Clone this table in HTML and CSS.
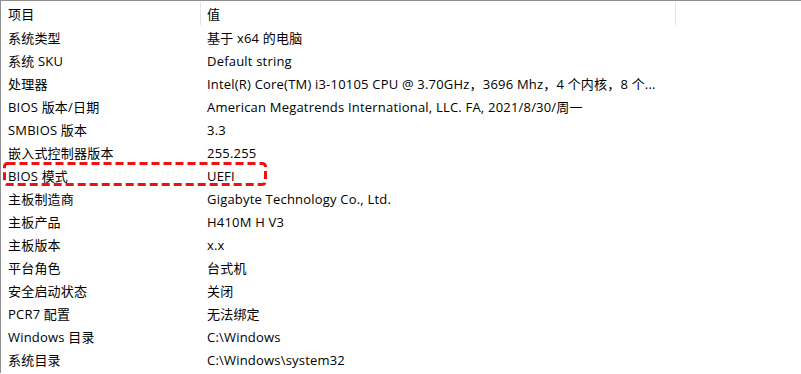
FILE: index.html
```html
<!DOCTYPE html>
<html lang="zh-CN">
<head>
<meta charset="utf-8">
<title>系统信息</title>
<link rel="stylesheet" href="styles.css">
</head>
<body>
<div class="list">
  <div class="header">
    <div class="hcell c1">项目</div>
    <div class="hcell c2">值</div>
    <div class="hcell c3"></div>
  </div>
  <div class="row"><div class="c1">系统类型</div><div class="c2">基于 x64 的电脑</div></div>
  <div class="row"><div class="c1">系统 SKU</div><div class="c2">Default string</div></div>
  <div class="row"><div class="c1">处理器</div><div class="c2">Intel(R) Core(TM) i3-10105 CPU @ 3.70GHz，3696 Mhz，4 个内核，8 个...</div></div>
  <div class="row"><div class="c1">BIOS 版本/日期</div><div class="c2">American Megatrends International, LLC. FA, 2021/8/30/周一</div></div>
  <div class="row"><div class="c1">SMBIOS 版本</div><div class="c2">3.3</div></div>
  <div class="row"><div class="c1">嵌入式控制器版本</div><div class="c2">255.255</div></div>
  <div class="row highlight">
    <div class="c1">BIOS 模式</div><div class="c2">UEFI</div>
    <svg class="mark" width="264" height="24" viewBox="0 0 264 24" aria-hidden="true">
      <rect x="1.5" y="1.5" width="261" height="21" rx="3" ry="3" fill="none" stroke="#ee1111" stroke-width="3" stroke-dasharray="8 4"/>
    </svg>
  </div>
  <div class="row"><div class="c1">主板制造商</div><div class="c2">Gigabyte Technology Co., Ltd.</div></div>
  <div class="row"><div class="c1">主板产品</div><div class="c2">H410M H V3</div></div>
  <div class="row"><div class="c1">主板版本</div><div class="c2">x.x</div></div>
  <div class="row"><div class="c1">平台角色</div><div class="c2">台式机</div></div>
  <div class="row"><div class="c1">安全启动状态</div><div class="c2">关闭</div></div>
  <div class="row"><div class="c1">PCR7 配置</div><div class="c2">无法绑定</div></div>
  <div class="row"><div class="c1">Windows 目录</div><div class="c2">C:\Windows</div></div>
  <div class="row"><div class="c1">系统目录</div><div class="c2">C:\Windows\system32</div></div>
</div>
</body>
</html>
```

FILE: styles.css
```css
html, body {
  margin: 0;
  padding: 0;
  background: #ffffff;
}

body {
  font-family: "Open Sans", "Noto Sans CJK SC", sans-serif;
  font-size: 13px;
  letter-spacing: 0.2px;
  color: #000000;
  width: 801px;
  height: 374px;
  overflow: hidden;
}

.list {
  border-top: 1px solid #8f8f8f;
  border-left: 1px solid #8f8f8f;
  height: 373px;
  box-sizing: border-box;
}

.header {
  display: flex;
  height: 26px;
  align-items: flex-start;
}

.hcell {
  height: 23px;
  margin-top: 1px;
  line-height: 24px;
  border-right: 1px solid #e3e3e3;
  box-sizing: border-box;
  white-space: nowrap;
}

.hcell.c1 { width: 200px; padding-left: 7px; }
.hcell.c2 { width: 475px; padding-left: 6px; }
.hcell.c3 { flex: 1; border-right: none; }

.row {
  display: flex;
  height: 23px;
  line-height: 23px;
  position: relative;
  white-space: nowrap;
}

.row .c1 { width: 200px; padding-left: 7px; box-sizing: border-box; }
.row .c2 { width: 475px; padding-left: 6px; box-sizing: border-box; overflow: hidden; }

.mark {
  position: absolute;
  left: 2px;
  top: -3px;
}
```
